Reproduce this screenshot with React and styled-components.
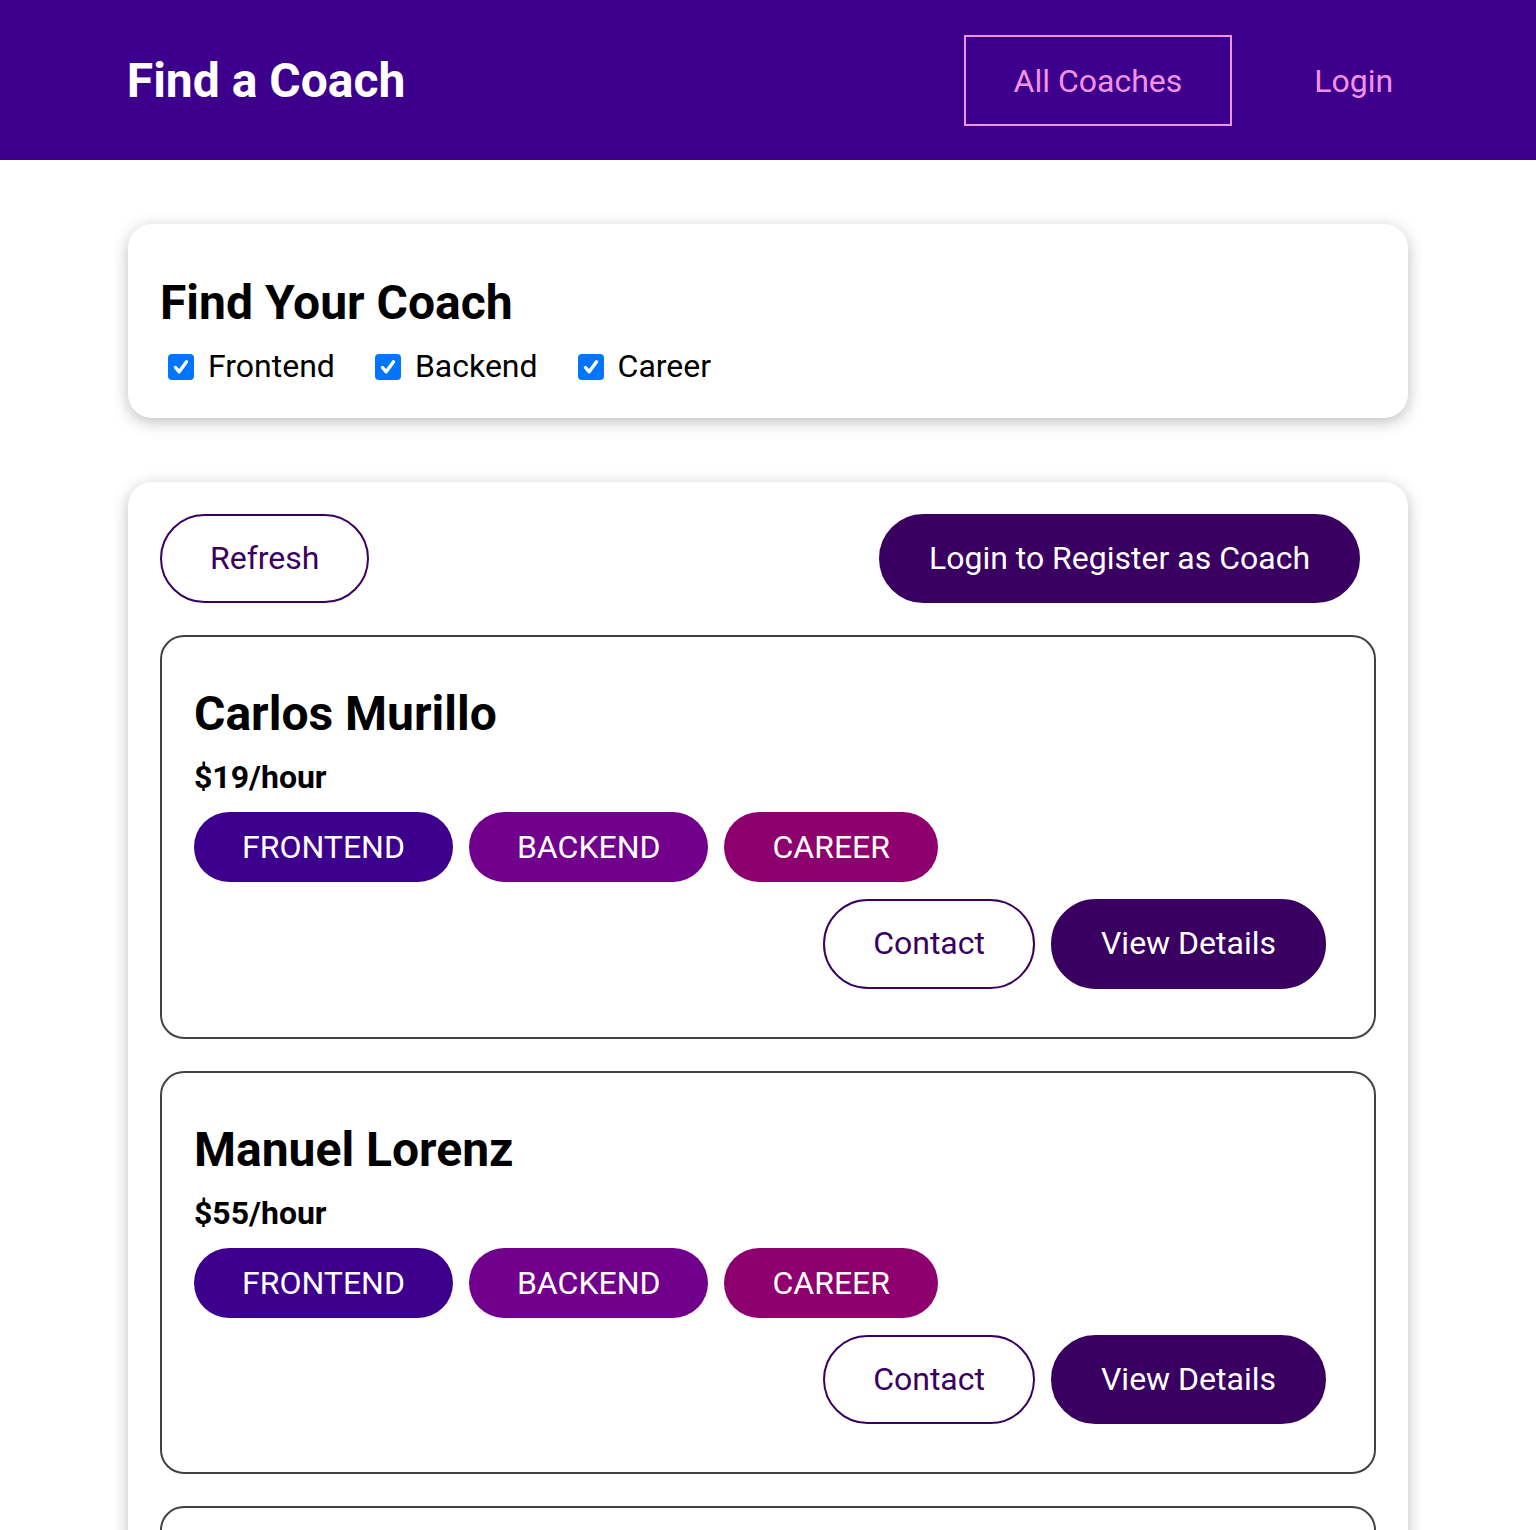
import React from 'react';
import styled, { createGlobalStyle } from 'styled-components';

const purple = '#3d008d';
const darkPurple = '#3a0061';
const pink = '#f391e3';

const areaColors = {
  frontend: '#3d008d',
  backend: '#71008d',
  career: '#8d006e',
};

const coaches = [
  { id: 'c1', name: 'Carlos Murillo', rate: 19, areas: ['frontend', 'backend', 'career'] },
  { id: 'c2', name: 'Manuel Lorenz', rate: 55, areas: ['frontend', 'backend', 'career'] },
  { id: 'c3', name: 'Julie Jones', rate: 30, areas: ['backend', 'career'] },
];

const GlobalStyle = createGlobalStyle`
  * {
    box-sizing: border-box;
  }
  html {
    font-family: Roboto, "Liberation Sans", sans-serif;
    font-size: 32px;
  }
  body {
    margin: 0;
    background: #fff;
  }
`;

const Header = styled.header`
  width: 100%;
  height: 160px;
  background-color: ${purple};
  display: flex;
  justify-content: center;
  align-items: center;
`;

const Nav = styled.nav`
  width: 90%;
  margin: auto;
  display: flex;
  justify-content: space-between;
  align-items: center;
`;

const Title = styled.h1`
  margin: 0;
  font-size: 48px;
  font-weight: 700;
`;

const TitleLink = styled.a`
  color: white;
  text-decoration: none;
  display: inline-block;
  padding: 24px 50px;
`;

const NavList = styled.ul`
  list-style: none;
  margin: 0;
  padding: 0;
  display: flex;
  align-items: center;
`;

const NavItem = styled.li`
  margin: 0 16px;
`;

const NavLink = styled.a`
  text-decoration: none;
  color: ${pink};
  display: inline-block;
  padding: 25px 48px 24px;
  border: 2px solid ${({ $active }) => ($active ? pink : 'transparent')};
`;

const Card = styled.section`
  max-width: 1280px;
  margin: 64px auto;
  padding: 32px;
  border-radius: 24px;
  background: white;
  box-shadow: 0 4px 16px rgba(0, 0, 0, 0.26);
`;

const FilterTitle = styled.h2`
  margin: 18px 0 15px;
  font-size: 48px;
  font-weight: 700;
`;

const FilterRow = styled.div`
  display: flex;
  align-items: center;
`;

const FilterOption = styled.label`
  display: flex;
  align-items: center;
  margin-right: 32px;
  line-height: 37.5px;
`;

const CheckBox = styled.span`
  width: 26px;
  height: 26px;
  margin: 7px 6px 5px 8px;
  border-radius: 4px;
  background: #0075ff;
  display: flex;
  align-items: center;
  justify-content: center;
`;

const OptionLabel = styled.span`
  margin-left: 8px;
  padding-top: 2px;
`;

const Controls = styled.div`
  display: flex;
  justify-content: space-between;
`;

const Button = styled.a`
  text-decoration: none;
  padding: 24px 48px;
  font: inherit;
  line-height: 37.5px;
  background-color: ${({ $outline }) => ($outline ? 'transparent' : darkPurple)};
  color: ${({ $outline }) => ($outline ? darkPurple : 'white')};
  border: 2px solid ${darkPurple};
  border-radius: 60px;
  margin-right: 16px;
  display: inline-block;
  cursor: pointer;
`;

const CoachList = styled.ul`
  list-style: none;
  margin: 0;
  padding: 0;
`;

const CoachItem = styled.li`
  margin: 32px 0;
  border: 2px solid #424242;
  border-radius: 24px;
  padding: 32px;
`;

const CoachName = styled.h3`
  font-size: 48px;
  font-weight: 700;
  margin: 16px 0;
`;

const Rate = styled.h4`
  font-size: 32px;
  font-weight: 700;
  margin: 16px 0;
`;

const Badges = styled.div`
  margin: 16px 0;
`;

const Badge = styled.span`
  display: inline-block;
  background-color: ${({ $area }) => areaColors[$area]};
  color: white;
  border-radius: 60px;
  padding: 16px 48px;
  margin-right: 16px;
  text-transform: uppercase;
`;

const Actions = styled.div`
  margin: 17px 0 16px;
  display: flex;
  justify-content: flex-end;
`;

function Check() {
  return (
    <CheckBox>
      <svg width="20" height="20" viewBox="0 0 20 20" fill="none">
        <path d="M4.5 10.5 L8.2 14.8 L15.5 4.8" stroke="white" strokeWidth="3.4" strokeLinecap="round" strokeLinejoin="round" />
      </svg>
    </CheckBox>
  );
}

function App() {
  return (
    <>
      <GlobalStyle />
      <Header>
        <Nav>
          <Title>
            <TitleLink>Find a Coach</TitleLink>
          </Title>
          <NavList>
            <NavItem>
              <NavLink $active>All Coaches</NavLink>
            </NavItem>
            <NavItem>
              <NavLink>Login</NavLink>
            </NavItem>
          </NavList>
        </Nav>
      </Header>
      <main>
        <Card>
          <FilterTitle>Find Your Coach</FilterTitle>
          <FilterRow>
            {['Frontend', 'Backend', 'Career'].map((label) => (
              <FilterOption key={label}>
                <Check />
                <OptionLabel>{label}</OptionLabel>
              </FilterOption>
            ))}
          </FilterRow>
        </Card>
        <Card>
          <Controls>
            <Button $outline>Refresh</Button>
            <Button>Login to Register as Coach</Button>
          </Controls>
          <CoachList>
            {coaches.map((coach) => (
              <CoachItem key={coach.id}>
                <CoachName>{coach.name}</CoachName>
                <Rate>${coach.rate}/hour</Rate>
                <Badges>
                  {coach.areas.map((area) => (
                    <Badge key={area} $area={area}>{area}</Badge>
                  ))}
                </Badges>
                <Actions>
                  <Button $outline>Contact</Button>
                  <Button>View Details</Button>
                </Actions>
              </CoachItem>
            ))}
          </CoachList>
        </Card>
      </main>
    </>
  );
}

export default App;
